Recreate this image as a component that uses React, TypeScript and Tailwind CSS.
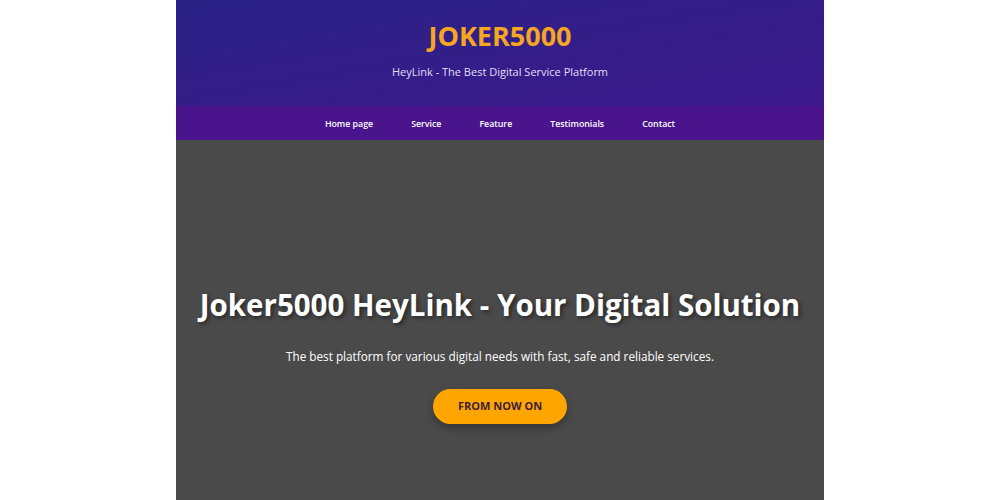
const NAV = ['Home page', 'Service', 'Feature', 'Testimonials', 'Contact'];

export default function App() {
  return (
    <div className="min-h-screen bg-white font-['Open_Sans',sans-serif]">
      <div className="mx-auto w-[648px]">
        <header className="flex h-[106px] flex-col items-center bg-gradient-to-br from-[#2a2185] to-[#3c1a8c] pt-[20px]">
          <h1 className="text-[27px] font-bold leading-[32px] text-[#f5a623]">JOKER5000</h1>
          <p className="mt-[12px] text-[11px] leading-[16px] text-[#e4ddf7]">
            HeyLink - The Best Digital Service Platform
          </p>
        </header>
        <nav className="flex h-[34px] items-center justify-center gap-[38px] bg-[#4a148c] pt-[3px]">
          {NAV.map((item) => (
            <a key={item} href="#" className="text-[8.8px] font-semibold text-white">
              {item}
            </a>
          ))}
        </nav>
        <section className="flex h-[360px] flex-col items-center bg-[#4a4a4a] pt-[145px] text-white">
          <h2 className="text-[29.5px] font-bold leading-[40px] [text-shadow:2px_2px_4px_rgba(0,0,0,0.5)]">
            Joker5000 HeyLink - Your Digital Solution
          </h2>
          <p className="mt-[22px] text-[11.75px] leading-[18px]">
            The best platform for various digital needs with fast, safe and reliable services.
          </p>
          <button className="mt-[24px] h-[35px] w-[134px] rounded-full bg-[#ffa500] text-[11px] font-bold text-[#3b1f3a] shadow-[0_4px_8px_rgba(0,0,0,0.3)]">
            FROM NOW ON
          </button>
        </section>
      </div>
    </div>
  );
}
